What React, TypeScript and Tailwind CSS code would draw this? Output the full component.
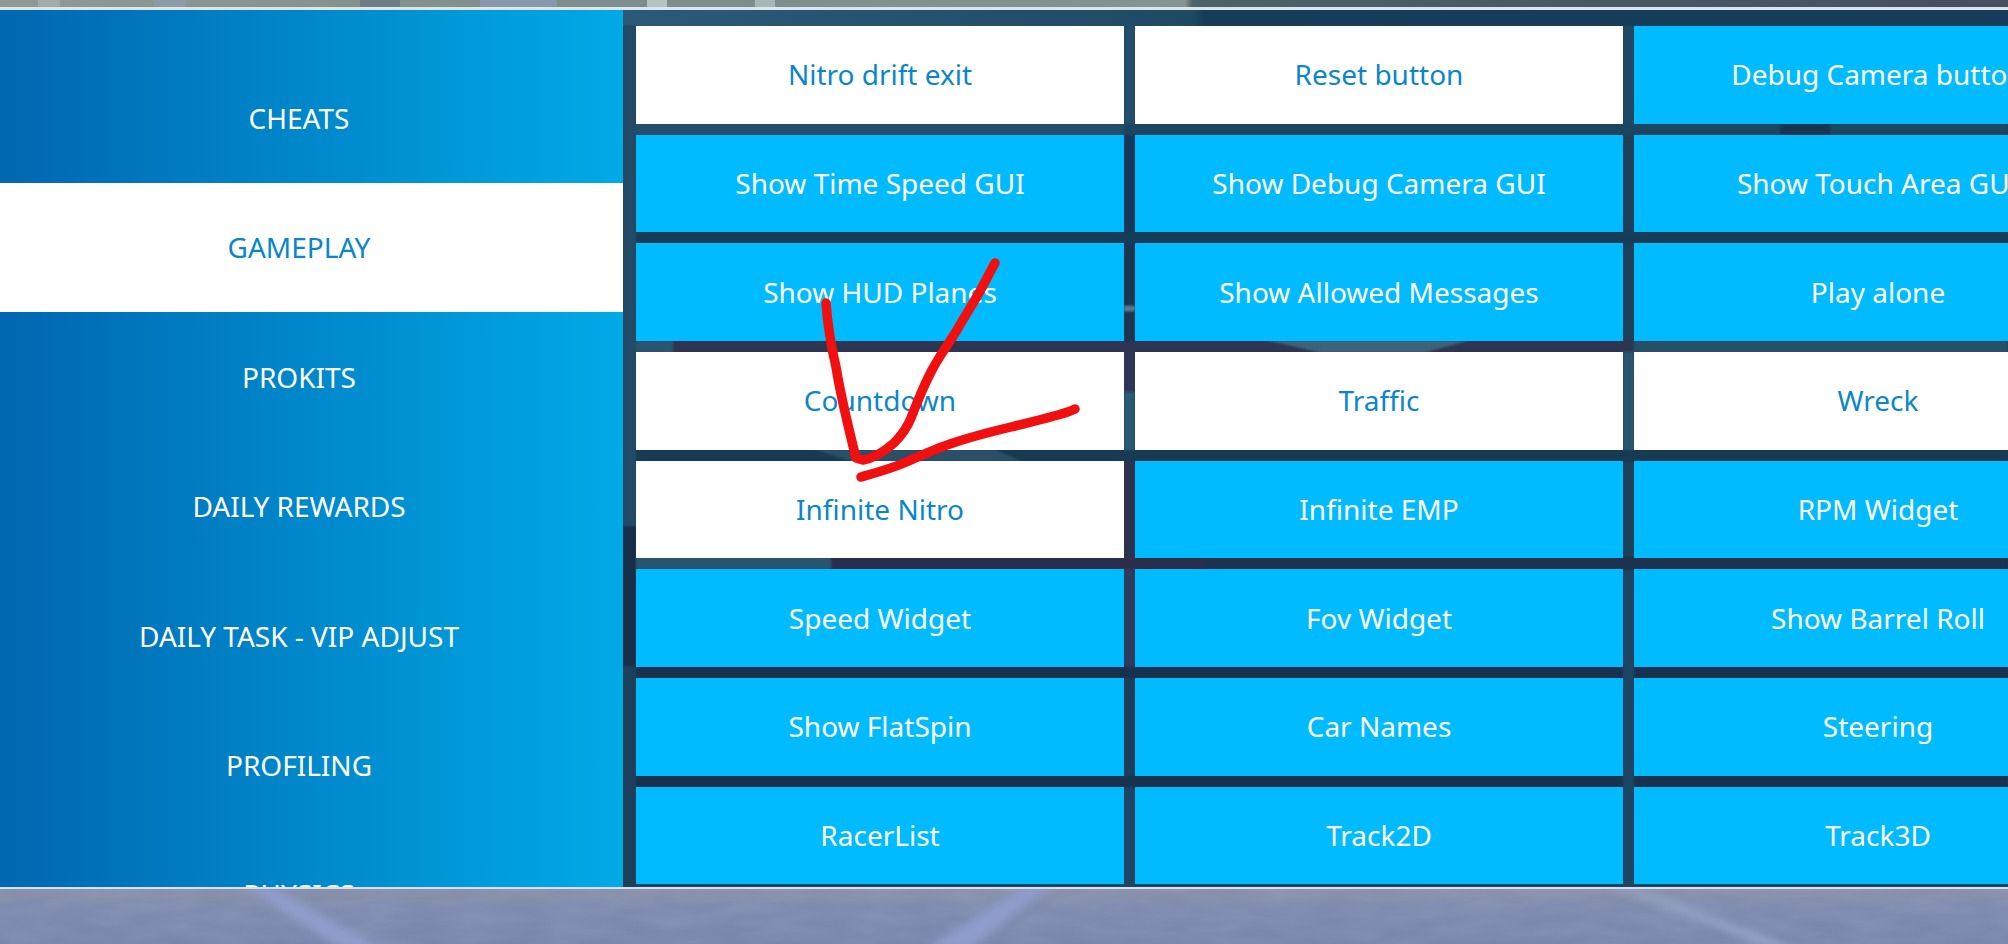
const tabs = ["CHEATS", "GAMEPLAY", "PROKITS", "DAILY REWARDS", "DAILY TASK - VIP ADJUST", "PROFILING", "PHYSICS"];

const options = [
  { label: "Nitro drift exit", on: true },
  { label: "Reset button", on: true },
  { label: "Debug Camera button" },
  { label: "Show Time Speed GUI" },
  { label: "Show Debug Camera GUI" },
  { label: "Show Touch Area GUI" },
  { label: "Show HUD Planes" },
  { label: "Show Allowed Messages" },
  { label: "Play alone" },
  { label: "Countdown", on: true },
  { label: "Traffic", on: true },
  { label: "Wreck", on: true },
  { label: "Infinite Nitro", on: true },
  { label: "Infinite EMP" },
  { label: "RPM Widget" },
  { label: "Speed Widget" },
  { label: "Fov Widget" },
  { label: "Show Barrel Roll" },
  { label: "Show FlatSpin" },
  { label: "Car Names" },
  { label: "Steering" },
  { label: "RacerList" },
  { label: "Track2D" },
  { label: "Track3D" },
];

// blurred game art showing through the gaps between the buttons
function PanelArt() {
  return (
    <svg className="absolute inset-0 h-full w-full" viewBox="0 0 1385 877" preserveAspectRatio="none">
      <defs>
        <linearGradient id="top" x1="0" x2="1" y1="0" y2="0">
          <stop offset="0" stopColor="#2b5a78" />
          <stop offset="0.41" stopColor="#1f4a66" />
          <stop offset="0.42" stopColor="#153d59" />
          <stop offset="1" stopColor="#173d5a" />
        </linearGradient>
        <filter id="soft">
          <feGaussianBlur stdDeviation="1" />
        </filter>
      </defs>
      <rect width="1385" height="877" fill="#1b4059" />
      <rect width="1385" height="16" fill="url(#top)" />
      <g filter="url(#soft)">
        {/* horizontal gaps */}
        <rect y="113" width="501" height="13" fill="#24506a" />
        <rect x="501" y="113" width="884" height="13" fill="#1a4460" />
        <rect x="1157" y="113" width="50" height="13" fill="#123650" />
        <rect y="221" width="1385" height="13" fill="#163c58" />
        <rect y="330" width="1385" height="13" fill="#2f3452" />
        <rect x="0" y="330" width="50" height="13" fill="#2a5570" />
        <polygon points="643,330 847,330 800,343 700,343" fill="#3d6478" />
        <rect x="1011" y="330" width="374" height="13" fill="#285068" />
        <rect y="439" width="1385" height="13" fill="#173a52" />
        <polygon points="190,439 370,439 400,452 230,452" fill="#2c5068" />
        <rect y="547" width="1385" height="13" fill="#2b2f4c" />
        <rect x="0" y="547" width="208" height="13" fill="#2c5570" />
        <rect x="582" y="547" width="803" height="13" fill="#1c3350" />
        <rect y="656" width="1385" height="13" fill="#15304f" />
        <rect y="765" width="1385" height="13" fill="#14304d" />
        <rect y="874" width="1385" height="3" fill="#1f4666" />
        {/* vertical gaps */}
        <rect x="501" y="16" width="11" height="98" fill="#24506e" />
        <rect x="501" y="125" width="11" height="98" fill="#15385a" />
        <rect x="501" y="234" width="11" height="98" fill="#1a3550" />
        <rect x="501" y="296" width="11" height="5" fill="#5a7a90" />
        <rect x="501" y="342" width="11" height="98" fill="#2f3555" />
        <rect x="501" y="382" width="11" height="58" fill="#2b5a76" />
        <rect x="501" y="451" width="11" height="98" fill="#2f3150" />
        <rect x="501" y="559" width="11" height="98" fill="#2f3b5c" />
        <rect x="501" y="668" width="11" height="98" fill="#1b3d5c" />
        <rect x="501" y="777" width="11" height="100" fill="#1d4464" />
        <rect x="0" y="16" width="13" height="500" fill="#234c68" />
        <rect x="0" y="516" width="13" height="140" fill="#172f48" />
        <rect x="0" y="656" width="13" height="221" fill="#1f3f5c" />
        <rect x="1000" y="16" width="11" height="98" fill="#1f4a66" />
        <rect x="1000" y="342" width="11" height="98" fill="#2a5672" />
        <rect x="1000" y="560" width="11" height="317" fill="#1f4463" />
      </g>
    </svg>
  );
}

function TopArt() {
  return (
    <svg className="absolute inset-0 h-full w-full" viewBox="0 0 2008 7" preserveAspectRatio="none">
      <defs>
        <linearGradient id="strip" x1="0" x2="1" y1="0" y2="0">
          <stop offset="0" stopColor="#8f9a92" />
          <stop offset="0.3" stopColor="#7d8c8c" />
          <stop offset="0.59" stopColor="#86948f" />
          <stop offset="0.594" stopColor="#4b6369" />
          <stop offset="1" stopColor="#454f5f" />
        </linearGradient>
      </defs>
      <rect width="2008" height="7" fill="url(#strip)" />
      <rect x="38" width="22" height="7" fill="#a9b2b0" fillOpacity="0.7" />
      <rect x="154" width="32" height="7" fill="#8d9cb2" fillOpacity="0.7" />
      <rect x="360" width="40" height="7" fill="#62767c" fillOpacity="0.7" />
      <rect x="480" width="77" height="7" fill="#8c9bb6" fillOpacity="0.7" />
      <rect x="647" width="20" height="7" fill="#c2d0d2" fillOpacity="0.8" />
      <rect x="755" width="20" height="7" fill="#b0c0c4" fillOpacity="0.8" />
    </svg>
  );
}

function BottomArt() {
  return (
    <svg className="absolute inset-0 h-full w-full" viewBox="0 0 2008 55">
      <defs>
        <linearGradient id="sky" x1="0" x2="0" y1="0" y2="1">
          <stop offset="0" stopColor="#8a91a8" />
          <stop offset="0.3" stopColor="#7f8bae" />
          <stop offset="1" stopColor="#7886ad" />
        </linearGradient>
        <filter id="blur">
          <feGaussianBlur stdDeviation="4" />
        </filter>
        <filter id="mottle" x="0" y="0" width="100%" height="100%">
          <feTurbulence type="fractalNoise" baseFrequency="0.02 0.08" numOctaves="3" seed="4" />
          <feColorMatrix values="0 0 0 0 0.45  0 0 0 0 0.5  0 0 0 0 0.68  0 0 0 0.9 -0.25" />
        </filter>
      </defs>
      <rect width="2008" height="55" fill="url(#sky)" />
      <rect width="2008" height="55" filter="url(#mottle)" opacity="0.3" />
      <g filter="url(#blur)">
        <polygon points="243,-5 265,-5 385,60 340,60" fill="#8e9dca" />
        <polygon points="1030,-5 1052,-5 970,60 925,60" fill="#8e9dcc" />
        <polygon points="1608,-5 1622,-5 1800,60 1772,60" fill="#98a5c8" />
      </g>
    </svg>
  );
}

export default function App() {
  return (
    <div className="flex h-screen w-full flex-col overflow-hidden bg-[#1b4059] font-['Noto_Sans',sans-serif]">
      <div className="relative h-[7px] shrink-0">
        <TopArt />
      </div>
      <div className="h-[3px] shrink-0 bg-[#dde5ea]" />

      <div className="flex h-[877px] shrink-0 overflow-hidden">
        {/* Category tabs */}
        <nav className="h-full w-[623px] shrink-0 overflow-hidden bg-gradient-to-r from-[#0067b1] to-[#00aae6] pt-[43.4px]">
          {tabs.map((tab) => (
            <div
              key={tab}
              className={
                tab === "GAMEPLAY"
                  ? "flex h-[129.4px] items-center justify-center bg-white pr-[25px] text-[28px] text-[#0a86cc]"
                  : "flex h-[129.4px] items-center justify-center pr-[25px] text-[28px] text-white"
              }
            >
              {tab}
            </div>
          ))}
        </nav>

        {/* Options grid */}
        <div className="relative flex-1 overflow-hidden">
          <PanelArt />
          <div className="relative grid w-[1486px] grid-cols-[repeat(3,488px)] auto-rows-[97.67px] gap-x-[11px] gap-y-[11px] pl-[13px] pt-[16px]">
            {options.map((option) => (
              <button
                key={option.label}
                className={
                  option.on
                    ? "flex items-center justify-center bg-white pb-[1px] text-[28px] text-[#0a86cc]"
                    : "flex items-center justify-center bg-[#00bbff] pb-[1px] text-[28px] text-white"
                }
              >
                {option.label}
              </button>
            ))}
          </div>
        </div>
      </div>

      <div className="h-[2px] shrink-0 bg-[#d5e0ee]" />
      <div className="relative flex-1">
        <BottomArt />
      </div>

      {/* Hand-drawn red annotation on top of the screenshot */}
      <svg className="pointer-events-none absolute left-0 top-0 h-[944px] w-[2008px]" viewBox="0 0 2008 944" fill="none">
        <path
          d="M826 303 C828 330 832 350 836 367 C841 398 849 430 856 458 L863 460 C876 458 886 450 894 443 C902 435 907 428 911 418 C918 400 924 385 932 370 C940 355 949 343 957 330 C965 316 972 305 979 293 C985 282 990 272 995 263"
          stroke="#f01010"
          strokeWidth="9.5"
          strokeLinecap="round"
          strokeLinejoin="round"
        />
        <path
          d="M861 477 C875 473 890 469 904 463 C920 456 935 449 950 444 C970 437 990 432 1011 427 C1027 423 1040 420 1054 416 C1062 414 1069 412 1075 409"
          stroke="#f01010"
          strokeWidth="9.5"
          strokeLinecap="round"
          strokeLinejoin="round"
        />
      </svg>
    </div>
  );
}
